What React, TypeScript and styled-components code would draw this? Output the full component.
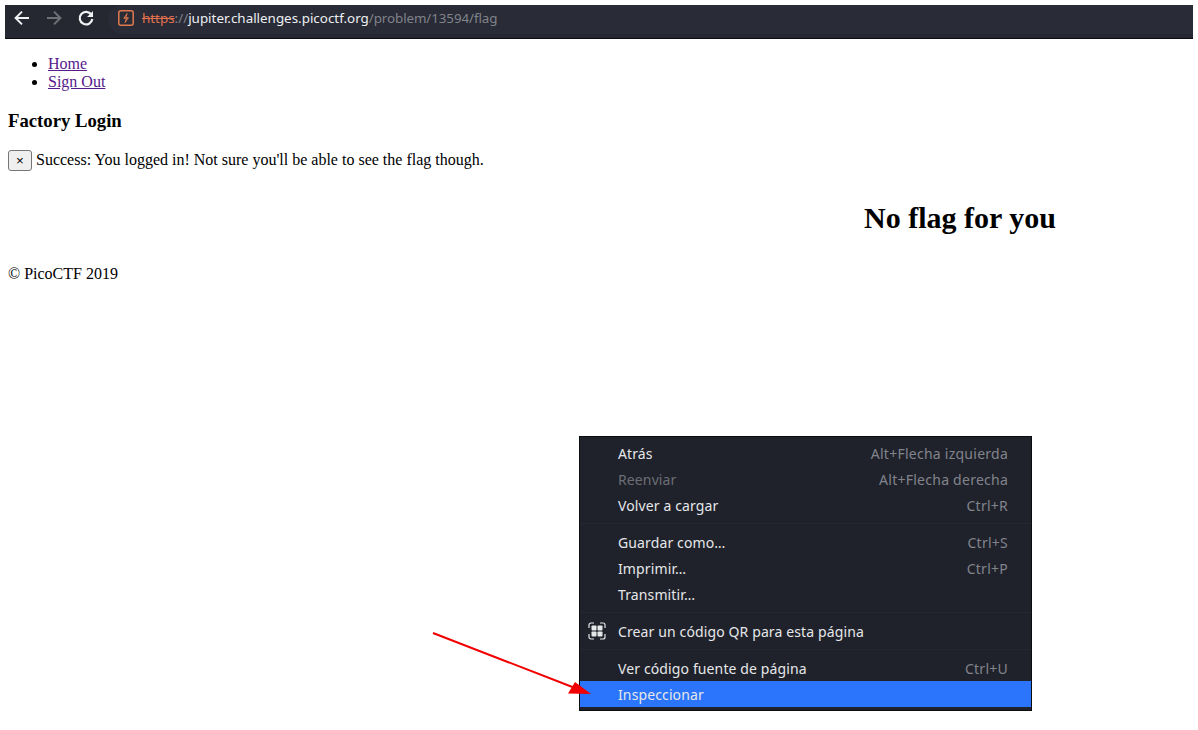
import React from "react";
import styled, { createGlobalStyle } from "styled-components";

const Global = createGlobalStyle`
  html, body { margin: 0; padding: 0; background: #fff; }
  body { font-family: "Liberation Serif", serif; font-size: 16px; color: #000; }
  #root { position: relative; width: 1198px; height: 730px; overflow: hidden; }
`;

const BrowserBar = styled.header`
  margin: 5px 5px 0;
  height: 34px;
  box-sizing: border-box;
  background: #252731;
  border-bottom: 1px solid #0c0d11;
  display: flex;
  align-items: flex-start;
  padding-left: 8px;
`;
const NavIcon = styled.svg<{ $dim?: boolean; $last?: boolean }>`
  width: 18px;
  height: 18px;
  flex: none;
  margin: 4px ${(p) => (p.$last ? "13px" : "14px")} 0 0;
  fill: none;
  stroke: ${(p) => (p.$dim ? "#6f7178" : "#f1f2f4")};
  stroke-width: 2;
`;
const Address = styled.div`
  flex: 1;
  height: 29px;
  box-sizing: border-box;
  padding: 0 0 3px 10px;
  display: flex;
  align-items: center;
  font-family: "Noto Sans", sans-serif;
  font-size: 13.4px;
  white-space: nowrap;
  background: #292b36;
  border-radius: 15px 0 0 15px;
`;
const BadgeIcon = styled.svg`
  width: 16px;
  height: 16px;
  flex: none;
  margin: 0 8px 0 0;
`;
const Scheme = styled.span`
  color: #e0704e;
  text-decoration: line-through;
`;
const Sep = styled.span`
  color: #80838b;
`;
const Host = styled.span`
  color: #eef0f3;
`;
const UrlPath = styled.span`
  color: #80838b;
  letter-spacing: -0.1px;
`;

const Content = styled.main`
  margin: 0 8px;
`;
const NavList = styled.ul`
  margin: 16px 0;
  padding-left: 40px;
`;
const NavLink = styled.a`
  color: #551a8b;
  text-decoration: underline;
`;
const Title = styled.h3`
  font-size: 18.72px;
  font-weight: bold;
  margin: 18.72px 0;
`;
const Alert = styled.div`
  display: flex;
  align-items: flex-start;
  height: 21px;
  gap: 4px;
  line-height: 19px;
`;
const CloseButton = styled.button`
  width: 24px;
  height: 21px;
  box-sizing: border-box;
  padding: 0;
  background: #efefef;
  border: 1px solid #767676;
  border-radius: 3px;
  font-family: "Liberation Sans", sans-serif;
  font-size: 13.33px;
  color: #000;
`;
const FlagHeading = styled.h1`
  font-size: 30px;
  font-weight: bold;
  margin: 28px 0 29px;
  padding-left: 856px;
  line-height: 37px;
  white-space: nowrap;
`;
const Footer = styled.p`
  margin: 16px 0;
`;

const Menu = styled.nav`
  position: absolute;
  left: 579px;
  top: 436px;
  width: 453px;
  height: 275px;
  box-sizing: border-box;
  background: #1f222b;
  border: 1px solid #0b0c10;
  padding: 3px 0;
  font-family: "Noto Sans", sans-serif;
  font-size: 14px;
  letter-spacing: 0.12px;
`;
const MenuRow = styled.div<{ $active?: boolean; $disabled?: boolean }>`
  height: 26px;
  display: flex;
  align-items: center;
  justify-content: space-between;
  padding: 0 23px 0 38px;
  position: relative;
  color: ${(p) => (p.$disabled ? "#6c6e75" : "#e6e7e9")};
  background: ${(p) => (p.$active ? "#2a75fb" : "transparent")};
`;
const Shortcut = styled.span`
  color: #82848b;
  letter-spacing: 0.25px;
`;
const MenuDivider = styled.div`
  height: 1px;
  background: #24272f;
  margin: 5px 0;
`;
const QrIcon = styled.svg`
  position: absolute;
  left: 8px;
  top: 4px;
  width: 18px;
  height: 18px;
`;
const Arrow = styled.svg`
  position: absolute;
  left: 430px;
  top: 630px;
  width: 170px;
  height: 70px;
  pointer-events: none;
`;

const rowsA = [
  { l: "Atrás", s: "Alt+Flecha izquierda" },
  { l: "Reenviar", s: "Alt+Flecha derecha", d: true },
  { l: "Volver a cargar", s: "Ctrl+R" },
];
const rowsB = [
  { l: "Guardar como…", s: "Ctrl+S" },
  { l: "Imprimir…", s: "Ctrl+P" },
  { l: "Transmitir…", s: "" },
];

export default function App() {
  return (
    <>
      <Global />
      <BrowserBar>
        <NavIcon viewBox="0 0 18 18">
          <path d="M16 9H3M9 2.600 2.600 9 9 15.400" />
        </NavIcon>
        <NavIcon viewBox="0 0 18 18" $dim>
          <path d="M2 9H15M9 2.600 15.400 9 9 15.400" />
        </NavIcon>
        <NavIcon viewBox="0 0 18 18" $last>
          <path d="M14.400 5.800A6.300 6.300 0 1 0 15.300 10" strokeWidth="2.200" />
          <path d="M16 2v6h-6z" fill="#f1f2f4" stroke="none" />
        </NavIcon>
        <Address>
          <BadgeIcon viewBox="0 0 16 16">
            <rect x="0.800" y="0.800" width="14.400" height="14.400" rx="2" fill="none" stroke="#e0794f" strokeWidth="1.500" />
            <path d="M9.200 3.500 5.800 8.300H8.500L7 12.500 10.400 7.700H7.700z" fill="none" stroke="#e0794f" strokeWidth="1" />
          </BadgeIcon>
          <Scheme>https</Scheme>
          <Sep>://</Sep>
          <Host>jupiter.challenges.picoctf.org</Host>
          <UrlPath>/problem/13594/flag</UrlPath>
        </Address>
      </BrowserBar>
      <Content>
        <NavList>
          <li><NavLink href="#">Home</NavLink></li>
          <li><NavLink href="#">Sign Out</NavLink></li>
        </NavList>
        <Title>Factory Login</Title>
        <Alert>
          <CloseButton>×</CloseButton>
          <span>Success: You logged in! Not sure you'll be able to see the flag though.</span>
        </Alert>
        <FlagHeading>No flag for you</FlagHeading>
        <Footer>© PicoCTF 2019</Footer>
      </Content>
      <Menu>
        {rowsA.map((r) => (
          <MenuRow key={r.l} $disabled={r.d}>
            <span>{r.l}</span>
            <Shortcut>{r.s}</Shortcut>
          </MenuRow>
        ))}
        <MenuDivider />
        {rowsB.map((r) => (
          <MenuRow key={r.l}>
            <span>{r.l}</span>
            <Shortcut>{r.s}</Shortcut>
          </MenuRow>
        ))}
        <MenuDivider />
        <MenuRow>
          <QrIcon viewBox="0 0 18 18">
            <path d="M6 1H3a2 2 0 0 0-2 2v3M12 1h3a2 2 0 0 1 2 2v3M6 17H3a2 2 0 0 1-2-2v-3M12 17h3a2 2 0 0 0 2-2v-3" fill="none" stroke="#e6e7e9" strokeWidth="1.200" />
            <rect x="3.500" y="3.500" width="5" height="5" rx="0.800" fill="#e6e7e9" />
            <rect x="9.500" y="3.500" width="5" height="5" rx="0.800" fill="#e6e7e9" />
            <rect x="3.500" y="9.500" width="5" height="5" rx="0.800" fill="#e6e7e9" />
            <rect x="9.500" y="9.500" width="5" height="5" rx="0.800" fill="#e6e7e9" />
          </QrIcon>
          <span>Crear un código QR para esta página</span>
        </MenuRow>
        <MenuDivider />
        <MenuRow>
          <span>Ver código fuente de página</span>
          <Shortcut>Ctrl+U</Shortcut>
        </MenuRow>
        <MenuRow $active>
          <span>Inspeccionar</span>
        </MenuRow>
      </Menu>
      <Arrow viewBox="0 0 170 70">
        <line x1="3" y1="3" x2="145" y2="58" stroke="#f20000" strokeWidth="2" />
        <polygon points="161,64 138,63.500 145,52" fill="#f20000" />
      </Arrow>
    </>
  );
}
